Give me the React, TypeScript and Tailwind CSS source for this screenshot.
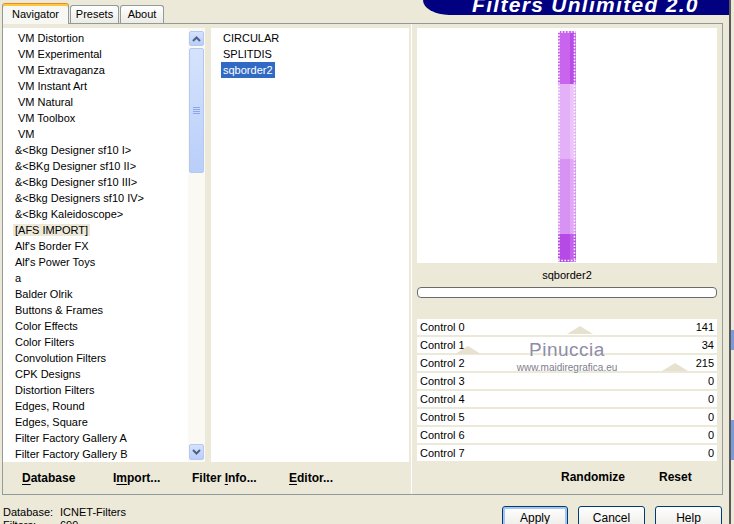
import React from 'react';

type Item = { label: string; indent?: boolean; hot?: boolean };

// left list of filter categories, as shown in the navigator
const CATEGORIES: Item[] = [
  { label: 'VM Distortion', indent: true },
  { label: 'VM Experimental', indent: true },
  { label: 'VM Extravaganza', indent: true },
  { label: 'VM Instant Art', indent: true },
  { label: 'VM Natural', indent: true },
  { label: 'VM Toolbox', indent: true },
  { label: 'VM', indent: true },
  { label: '&<Bkg Designer sf10 I>' },
  { label: '&<BKg Designer sf10 II>' },
  { label: '&<Bkg Designer sf10 III>' },
  { label: '&<Bkg Designers sf10 IV>' },
  { label: '&<Bkg Kaleidoscope>' },
  { label: '[AFS IMPORT]', hot: true },
  { label: "Alf's Border FX" },
  { label: "Alf's Power Toys" },
  { label: 'a' },
  { label: 'Balder Olrik' },
  { label: 'Buttons & Frames' },
  { label: 'Color Effects' },
  { label: 'Color Filters' },
  { label: 'Convolution Filters' },
  { label: 'CPK Designs' },
  { label: 'Distortion Filters' },
  { label: 'Edges, Round' },
  { label: 'Edges, Square' },
  { label: 'Filter Factory Gallery A' },
  { label: 'Filter Factory Gallery B' },
];

const FILTERS = ['CIRCULAR', 'SPLITDIS', 'sqborder2'];

const CONTROLS = [141, 34, 215, 0, 0, 0, 0, 0];

function Chevron({ up }: { up?: boolean }) {
  return (
    <svg width="9" height="6" viewBox="0 0 9 6">
      <path
        d={up ? 'M1 5 L4.5 1.5 L8 5' : 'M1 1 L4.5 4.5 L8 1'}
        fill="none"
        stroke="#4D6185"
        strokeWidth="2"
      />
    </svg>
  );
}

function ScrollBar() {
  const btn =
    'flex items-center justify-center rounded-[2px] border border-[#B4C8F6] bg-gradient-to-b from-[#D6E3FD] to-[#B9CEF9]';
  return (
    <div className="flex h-full w-[17px] flex-col bg-[#FAF9F4] px-[1px] pt-[3px] pb-[2px]">
      <div className={`${btn} h-[15px]`}>
        <Chevron up />
      </div>
      <div className={`${btn} mt-[2px] h-[125px] flex-col gap-[1px]`}>
        <div className="h-px w-[7px] bg-[#8CA8E8]" />
        <div className="h-px w-[7px] bg-[#8CA8E8]" />
        <div className="h-px w-[7px] bg-[#8CA8E8]" />
        <div className="h-px w-[7px] bg-[#8CA8E8]" />
      </div>
      <div className="flex-1" />
      <div className={`${btn} h-[16px]`}>
        <Chevron />
      </div>
    </div>
  );
}

function Stripe() {
  return (
    <svg width="18" height="231" viewBox="0 0 18 231" className="block">
      <rect x="0" y="0" width="18" height="53" fill="#C964EE" />
      <rect x="12" y="0" width="4" height="53" fill="#B84DE6" />
      <rect x="0" y="53" width="18" height="75" fill="#E4B0F8" />
      <rect x="12" y="53" width="4" height="75" fill="#EBC4FA" />
      <rect x="0" y="128" width="18" height="75" fill="#D892F4" />
      <rect x="12" y="128" width="4" height="75" fill="#E2A8F6" />
      <rect x="0" y="203" width="18" height="28" fill="#B54AE6" />
      <rect x="12" y="203" width="4" height="28" fill="#C262EA" />
      <g stroke="#FFFFFF" strokeWidth="1.6" strokeDasharray="1.6 1.6" fill="none">
        <line x1="1" y1="0" x2="1" y2="231" />
        <line x1="16.5" y1="0" x2="16.5" y2="231" />
        <line x1="0" y1="1" x2="18" y2="1" />
        <line x1="0" y1="229.5" x2="18" y2="229.5" />
      </g>
    </svg>
  );
}

function Tri({ className }: { className: string }) {
  return (
    <svg width="26" height="8" viewBox="0 0 26 8" className={`absolute ${className}`}>
      <path d="M0 8 L13 0 L26 8 Z" fill="#E7E2D0" />
    </svg>
  );
}

function Hot({ children }: { children: React.ReactNode }) {
  return <span className="underline underline-offset-[2px]">{children}</span>;
}

export default function App() {
  return (
    <div className="flex h-[524px] w-[734px] overflow-hidden bg-[#ECE9D8] font-['Liberation_Sans',Arial,sans-serif] text-[11px] text-black">
      <div className="flex w-[729px] flex-col">
        {/* ── tabs + title banner ─────────────────────── */}
        <div className="flex h-[23px] items-start">
          <div className="flex h-[23px] items-end pl-[2px]">
            <div className="relative z-10 -mb-[1px] flex h-[21px] w-[67px] items-center justify-center rounded-t-[3px] border border-b-0 border-[#919B9C] border-t-[#E68B2C] bg-[#F7F7F3] shadow-[inset_0_2px_0_#FFC83C]">
              Navigator
            </div>
            <div className="ml-[1px] flex h-[18px] w-[49px] items-center justify-center rounded-t-[3px] border border-b-0 border-[#919B9C] bg-gradient-to-b from-white to-[#ECEBE6]">
              Presets
            </div>
            <div className="ml-[1px] flex h-[18px] w-[44px] items-center justify-center rounded-t-[3px] border border-b-0 border-[#919B9C] bg-gradient-to-b from-white to-[#ECEBE6]">
              About
            </div>
          </div>
          <div className="ml-auto h-[15px] w-[306px] overflow-hidden rounded-bl-[26px_15px] bg-[#000080] pl-[49px]">
            <div className="-mt-[6px] text-[21px] leading-none font-bold italic tracking-[1.3px] whitespace-nowrap text-white">
              Filters Unlimited 2.0
            </div>
          </div>
        </div>

        {/* ── tab body ─────────────────────────────────── */}
        <div className="ml-[2px] flex h-[472px] w-[721px] border border-[#919B9C] bg-[#ECE9D8]">
          <div className="flex w-[408px] flex-col">
            <div className="flex h-[438px] pt-[4px]">
              <div className="h-full w-[185px] overflow-hidden bg-white pt-[2px]">
                {CATEGORIES.map((c) => (
                  <div key={c.label} className={`h-[16px] leading-[16px] whitespace-nowrap ${c.indent ? 'pl-[13px]' : 'pl-[10px]'}`}>
                    <span className={`px-[2px] ${c.hot ? 'bg-[#ECE9D8]' : ''}`}>{c.label}</span>
                  </div>
                ))}
              </div>
              <ScrollBar />
              <div className="w-[6px]" />
              <div className="h-full w-[198px] bg-white pt-[2px]">
                {FILTERS.map((f, i) => (
                  <div key={f} className="h-[16px] pl-[10px] leading-[16px]">
                    <span className={`inline-block px-[2px] ${i === 2 ? 'bg-[#316AC5] text-white' : ''}`}>{f}</span>
                  </div>
                ))}
              </div>
            </div>
            <div className="flex h-[32px] items-center pl-[19px] text-[12px] font-bold">
              <div className="w-[91px]">
                <Hot>D</Hot>atabase
              </div>
              <div className="w-[79px]">
                I<Hot>m</Hot>port...
              </div>
              <div className="w-[97px]">
                Filter <Hot>I</Hot>nfo...
              </div>
              <div>
                <Hot>E</Hot>ditor...
              </div>
            </div>
          </div>

          {/* right: preview and controls */}
          <div className="flex w-[311px] flex-col border-l border-white pt-[4px] pr-[5px] pl-[5px]">
            <div className="flex h-[235px] justify-center bg-white pt-[3px]">
              <Stripe />
            </div>
            <div className="h-[24px] text-center leading-[24px]">sqborder2</div>
            <div className="h-[11px] rounded-[4px] border border-[#6B6B6B] bg-white" />
            <div className="relative mt-[21px] flex flex-col gap-[2px]">
              {CONTROLS.map((v, i) => (
                <div key={i} className="flex h-[16px] items-center justify-between bg-white px-[3px] leading-[16px]">
                  <span>Control {i}</span>
                  <span>{v}</span>
                </div>
              ))}
              {/* watermark over the control rows */}
              <Tri className="top-[7px] left-[150px]" />
              <Tri className="top-[44px] left-[245px]" />
              <Tri className="top-[27px] left-[38px]" />
              <div className="pointer-events-none absolute top-[20px] left-0 w-full text-center text-[19px] leading-[22px] tracking-[0.5px] text-[#8E8CA6] [text-shadow:0_0_2px_#fff]">
                Pinuccia
              </div>
              <div className="pointer-events-none absolute top-[43px] left-0 w-full text-center text-[10px] leading-[12px] text-[#7E7E8E] [text-shadow:0_0_2px_#fff]">
                www.maidiregrafica.eu
              </div>
            </div>
            <div className="flex h-[32px] items-center text-[12px] font-bold">
              <div className="w-[242px] pl-[144px]">Randomize</div>
              <div>Reset</div>
            </div>
          </div>
        </div>

        {/* ── status + dialog buttons ─────────────────── */}
        <div className="flex">
          <div className="grid grid-cols-[57px_auto] pt-[11px] pl-[3px] leading-[13px]">
            <span>Database:</span>
            <span>ICNET-Filters</span>
            <span>Filters:</span>
            <span>699</span>
          </div>
          <div className="ml-auto flex gap-[10px] pt-[11px] pr-[7px] text-[12px]">
            <button className="h-[23px] w-[66px] rounded-[3px] border border-[#003C74] bg-gradient-to-b from-white to-[#ECEBE6] shadow-[inset_0_0_0_2px_#A9C3F0]">
              Apply
            </button>
            <button className="h-[23px] w-[67px] rounded-[3px] border border-[#003C74] bg-gradient-to-b from-white to-[#ECEBE6]">
              Cancel
            </button>
            <button className="h-[23px] w-[67px] rounded-[3px] border border-[#003C74] bg-gradient-to-b from-white to-[#ECEBE6]">
              Help
            </button>
          </div>
        </div>
      </div>

      {/* edge of the window behind */}
      <div className="flex w-[5px] flex-col border-l-2 border-[#5A5A5A] bg-[#ECE9D8]">
        <div className="h-[330px]" />
        <div className="h-[20px] bg-[#7D9AD8]" />
        <div className="h-[70px]" />
        <div className="h-[40px] bg-[#7D9AD8]" />
      </div>
    </div>
  );
}
